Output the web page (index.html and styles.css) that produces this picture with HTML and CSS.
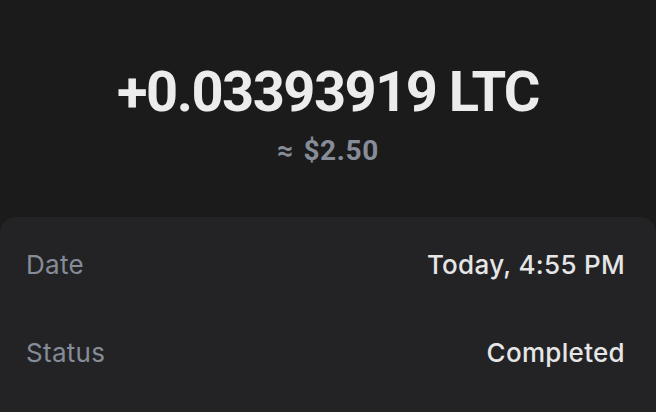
FILE: index.html
```html
<!DOCTYPE html>
<html lang="en">
<head>
    <meta charset="UTF-8">
    <meta name="viewport" content="width=device-width, initial-scale=1.0">
    <title>Transaction</title>
    <link rel="stylesheet" href="styles.css">
</head>
<body>

    <div class="summary">
        <div class="amount">+0.03393919 LTC</div>
        <div class="fiat">≈ $2.50</div>
    </div>

    <div class="details">
        <div class="row">
            <span class="label">Date</span>
            <span class="value">Today, 4:55 PM</span>
        </div>
        <div class="row">
            <span class="label">Status</span>
            <span class="value">Completed</span>
        </div>
    </div>

</body>
</html>
```

FILE: styles.css
```css
body {
    margin: 0;
    background-color: #1b1b1c;
    font-family: Inter, "Noto Sans", sans-serif;
    height: 412px;
    overflow: hidden;
    display: flex;
    flex-direction: column;
}

.summary {
    height: 217px;
    flex-shrink: 0;
    display: flex;
    flex-direction: column;
    align-items: center;
    padding-top: 60px;
    box-sizing: border-box;
}

.amount {
    font-family: Roboto, "DejaVu Sans", sans-serif;
    font-weight: 700;
    font-size: 56px;
    line-height: 64px;
    color: #ececec;
    letter-spacing: -1.5px;
}

.fiat {
    font-family: Roboto, "DejaVu Sans", sans-serif;
    font-weight: 700;
    font-size: 28px;
    line-height: 34px;
    margin-top: 10px;
    color: #868d99;
    letter-spacing: 0.6px;
    word-spacing: 2px;
}

.details {
    flex: 1;
    background-color: #232325;
    border-radius: 16px 16px 0 0;
    padding: 22px 31px 0 26px;
}

.row {
    display: flex;
    justify-content: space-between;
    align-items: center;
    height: 50px;
    margin-bottom: 38px;
}

.label {
    font-size: 26px;
    color: #858c98;
    letter-spacing: 0.3px;
}

.value {
    font-size: 26px;
    font-weight: 500;
    color: #e6e6e6;
    letter-spacing: 0.3px;
}
```
